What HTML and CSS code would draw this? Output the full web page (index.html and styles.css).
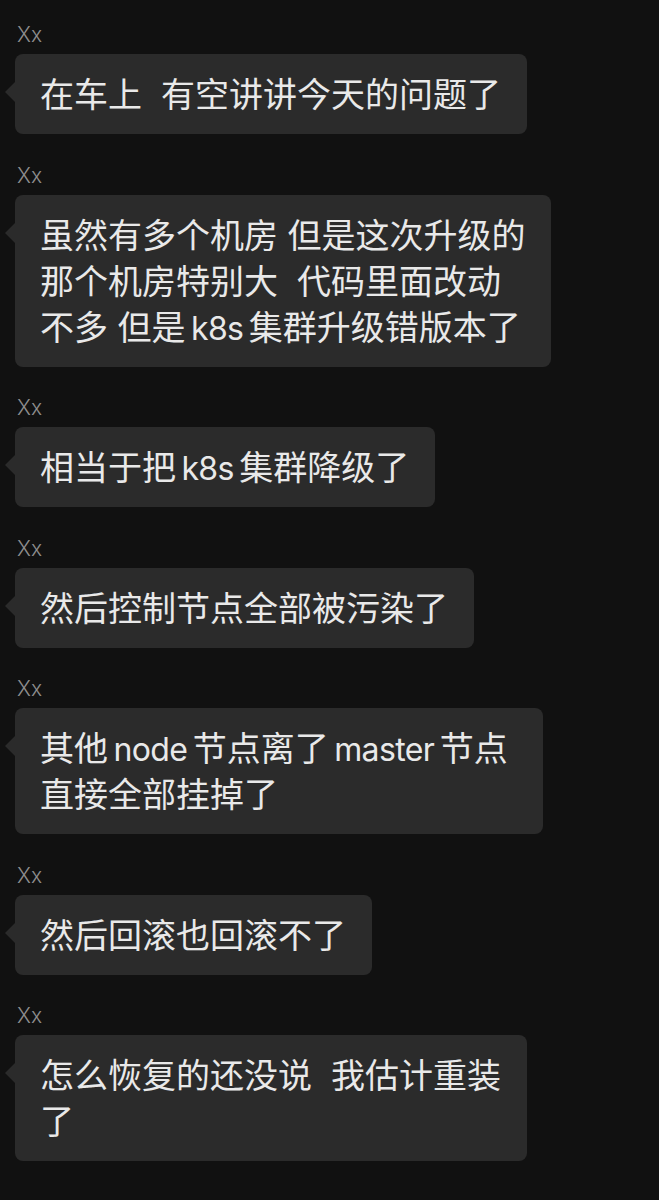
FILE: index.html
```html
<!DOCTYPE html>
<html lang="zh-CN">
<head>
<meta charset="utf-8">
<title>Chat</title>
<link rel="stylesheet" href="styles.css">
</head>
<body>
<main class="chat">
  <section class="msg">
    <div class="name">Xx</div>
    <div class="bubble">在车上&nbsp; 有空讲讲今天的问题了</div>
  </section>
  <section class="msg">
    <div class="name">Xx</div>
    <div class="bubble bubble--w536">虽然有多个机房 但是这次升级的<br>那个机房特别大&nbsp; 代码里面改动<br>不多 但是<span class="latin"> k8s </span>集群升级错版本了</div>
  </section>
  <section class="msg">
    <div class="name">Xx</div>
    <div class="bubble">相当于把<span class="latin"> k8s </span>集群降级了</div>
  </section>
  <section class="msg">
    <div class="name">Xx</div>
    <div class="bubble">然后控制节点全部被污染了</div>
  </section>
  <section class="msg">
    <div class="name">Xx</div>
    <div class="bubble bubble--w528">其他<span class="latin"> node </span>节点离了<span class="latin"> master </span>节点<br>直接全部挂掉了</div>
  </section>
  <section class="msg">
    <div class="name">Xx</div>
    <div class="bubble">然后回滚也回滚不了</div>
  </section>
  <section class="msg">
    <div class="name">Xx</div>
    <div class="bubble">怎么恢复的还没说&nbsp; 我估计重装<br>了</div>
  </section>
</main>
</body>
</html>
```

FILE: styles.css
```css
html, body {
  margin: 0;
  padding: 0;
  background: #111111;
}

.chat {
  display: flex;
  flex-direction: column;
  align-items: flex-start;
  gap: 29.5px;
  padding: 23px 0 0 15px;
}

.msg {
  display: flex;
  flex-direction: column;
  align-items: flex-start;
  gap: 7px;
}

.name {
  font-family: Inter, "Noto Sans", sans-serif;
  font-weight: 300;
  font-size: 21px;
  line-height: 24px;
  color: #8e8e8e;
  padding-left: 2px;
}

.bubble {
  position: relative;
  box-sizing: border-box;
  background: #2b2b2b;
  color: #e9e9e9;
  border-radius: 8px;
  padding: 18px 26px 16px 25px;
  font-family: Inter, "Noto Sans CJK SC", sans-serif;
  font-size: 34px;
  line-height: 46px;
  white-space: nowrap;
}

.latin {
  font-size: 32px;
  line-height: 1;
  letter-spacing: -0.6px;
  word-spacing: -3px;
}

.bubble::before {
  content: "";
  position: absolute;
  left: -10px;
  top: 28px;
  border-style: solid;
  border-width: 10px 10px 10px 0;
  border-color: transparent #2b2b2b transparent transparent;
}

.bubble--w536 { width: 536px; }
.bubble--w528 { width: 528px; }
```
